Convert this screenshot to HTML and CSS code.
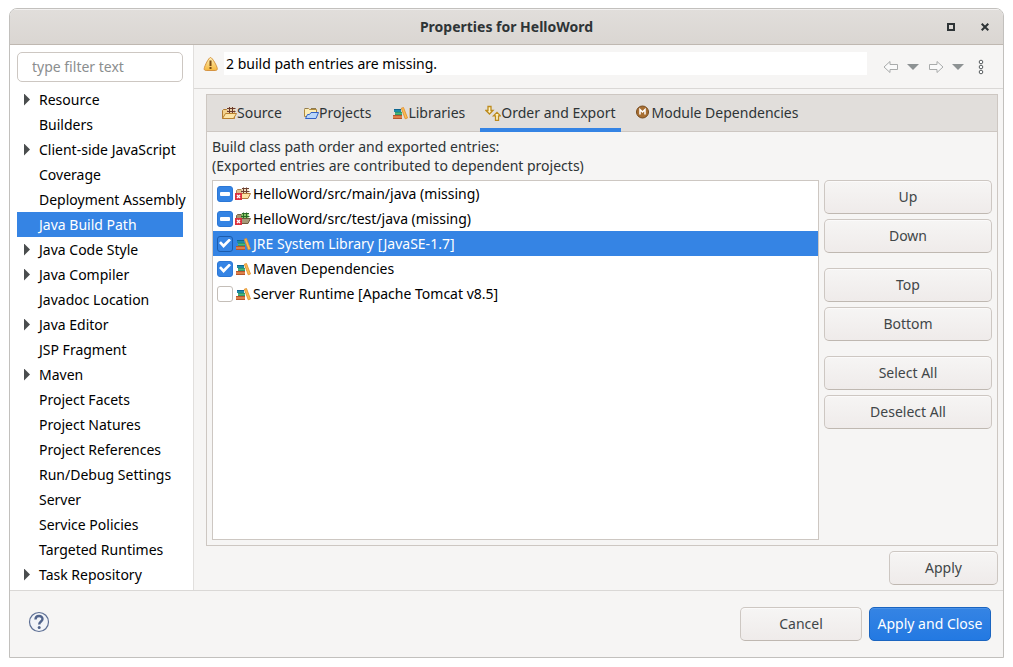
FILE: index.html
```html
<!DOCTYPE html>
<html lang="en">
<head>
<meta charset="utf-8">
<title>Properties for HelloWord</title>
<link rel="stylesheet" href="styles.css">
</head>
<body>
<svg class="defs" aria-hidden="true">
  <symbol id="books" viewBox="0 0 16 16">
    <path d="M2 4h7v3H2z" fill="#1d8ba8"/><path d="M2 4.500h7" stroke="#0d6690"/>
    <path d="M3 7h7v3H3z" fill="#4fb878"/><path d="M3 7.300h7M3 9.700h7" stroke="#1b8260" stroke-width=".7"/>
    <path d="M1 10h9v4H1z" fill="#dc8048"/><path d="M1 10.500h9M1 13.500h9" stroke="#b8552c"/>
    <path d="M9.300 3.200l2.200-.7 4 10.500-2.300.8z" fill="#f9bd58" stroke="#e08a26" stroke-width=".8"/>
  </symbol>
  <symbol id="source" viewBox="0 0 16 16">
    <path d="M1.500 13.500V5.500l1-1h3l1 1h7v8z" fill="#f3d28c" stroke="#b07a30"/>
    <path d="M6.500 2.500h7v6h-7z" fill="#e9d0a8"/><path d="M8.500 2v7M11.500 2v7M6 3.500h8.500M6 6.500h8.500" stroke="#6b3a2c"/>
    <path d="M1.500 13.500l3-5h11l-3 5z" fill="#fde5a6" stroke="#b9802e"/>
  </symbol>
  <symbol id="projects" viewBox="0 0 16 16">
    <path d="M1.500 11.500v-7l1-1h3l1 1h7v7z" fill="#fbedb9" stroke="#b08a3c"/>
    <path d="M1.500 3.500h3M8 3.500h5" stroke="#8d7b52"/>
    <path d="M2.500 13.500l2-4h2l1.500-2h7.500l-2.500 6z" fill="#b8d6fa" stroke="#3261c4"/>
  </symbol>
  <symbol id="order" viewBox="0 0 16 16">
    <path d="M3 1.500h3v4h2L4.500 9 1 5.500h2z" fill="#fff3c4" stroke="#bd8b1d" stroke-width="1.300"/>
    <path d="M10.500 15.300h3v-4.500h2L12 7.300 8.500 10.800h2z" fill="#fff3c4" stroke="#bd8b1d" stroke-width="1.300"/>
  </symbol>
  <symbol id="module" viewBox="0 0 16 16">
    <circle cx="6.500" cy="7" r="6" fill="#a86f32" stroke="#75491c"/>
    <path d="M4 9.500v-5l2.500 2.500L9 4.500v5" fill="none" stroke="#fff" stroke-width="1.500"/>
  </symbol>
  <symbol id="pkg" viewBox="0 0 16 16">
    <path d="M1.500 7.500v-3l1-1h4v4z" fill="#e3c08c" stroke="#b08050"/>
    <path d="M6.500 2.500h7v5h-7z" fill="#f0dec0"/><path d="M7 2.500h7M6 5.500h8.500M8.500 1.500v6M11.500 1.500v6" stroke="#6d4030"/>
    <path d="M1.500 7.500h14L13 12.500H4z" fill="#fde3a4" stroke="#b07a3c"/>
    <path d="M0 7h7v7H0z" fill="#dc3340"/><path d="M2 9l3 3M5 9l-3 3" stroke="#fff" stroke-width="1.300"/>
  </symbol>
  <symbol id="pkgtest" viewBox="0 0 16 16">
    <path d="M1.500 7.500v-3l1-1h4v4z" fill="#a99672" stroke="#7a6245"/>
    <path d="M6.500 2.500h7v5h-7z" fill="#8cc868"/><path d="M7 2.500h7M6 5.500h8.500M8.500 1.500v6M11.500 1.500v6" stroke="#2a6b28"/>
    <path d="M1.500 7.500h14L13 12.500H4z" fill="#a59a78" stroke="#705a3e"/>
    <path d="M0 7h7v7H0z" fill="#dc3340"/><path d="M2 9l3 3M5 9l-3 3" stroke="#fff" stroke-width="1.300"/>
  </symbol>
</svg>

<main class="dialog">
  <header class="titlebar">
    <h1 class="title">Properties for HelloWord</h1>
    <div class="window-buttons">
      <button class="plain" aria-label="Maximize"><svg width="8" height="8"><path d="M1 1h6v6H1z" fill="none" stroke="#2e3436" stroke-width="2"/></svg></button>
      <button class="plain" aria-label="Close"><svg width="8" height="8"><path d="M.7.7l6.600 6.600M7.300.7L.7 7.300" stroke="#2e3436" stroke-width="2"/></svg></button>
    </div>
  </header>

  <div class="body">
    <nav class="sidebar" aria-label="Property pages">
      <input class="filter" type="text" placeholder="type filter text" aria-label="Filter">
      <ul class="pages">
        <li class="page parent">Resource</li>
        <li class="page">Builders</li>
        <li class="page parent">Client-side JavaScript</li>
        <li class="page">Coverage</li>
        <li class="page">Deployment Assembly</li>
        <li class="page selected">Java Build Path</li>
        <li class="page parent">Java Code Style</li>
        <li class="page parent">Java Compiler</li>
        <li class="page">Javadoc Location</li>
        <li class="page parent">Java Editor</li>
        <li class="page">JSP Fragment</li>
        <li class="page parent">Maven</li>
        <li class="page">Project Facets</li>
        <li class="page">Project Natures</li>
        <li class="page">Project References</li>
        <li class="page">Run/Debug Settings</li>
        <li class="page">Server</li>
        <li class="page">Service Policies</li>
        <li class="page">Targeted Runtimes</li>
        <li class="page parent">Task Repository</li>
      </ul>
    </nav>

    <section class="content">
      <div class="message-bar">
        <svg class="warning" width="16" height="16" viewBox="0 0 16 16"><defs><linearGradient id="amber" x2="0" y2="1"><stop stop-color="#fff0b8"/><stop offset="1" stop-color="#f5b73c"/></linearGradient></defs><path d="M7.500 1.500C9.300 1.500 14 10 14.300 12.500c0 1.500-.8 2-2 2H3.200c-1.500 0-2.200-.7-2-2C1.600 10 5.700 1.500 7.500 1.500z" fill="url(#amber)" stroke="#d59443"/><path d="M7.500 4.500v5.500M7.500 11v2" stroke="#7a4b12" stroke-width="2"/></svg>
        <p class="message">2 build path entries are missing.</p>
        <div class="history">
          <button class="plain" aria-label="Back"><svg width="16" height="14"><path d="M1 7L7 1.500v3h7.500v5H7v3z" fill="#fafafa" stroke="#a9abab"/></svg></button>
          <button class="plain" aria-label="Back history"><svg width="12" height="14"><path d="M0 4h12L6 10z" fill="#8d9293"/></svg></button>
          <button class="plain" aria-label="Forward"><svg width="16" height="14"><path d="M15 7L9 1.500v3H1.500v5H9v3z" fill="#fafafa" stroke="#a9abab"/></svg></button>
          <button class="plain" aria-label="Forward history"><svg width="12" height="14"><path d="M0 4h12L6 10z" fill="#8d9293"/></svg></button>
          <button class="plain" aria-label="View menu"><svg width="6" height="16"><g fill="#fff" stroke="#555a5c"><circle cx="3" cy="3" r="1.800"/><circle cx="3" cy="8" r="1.800"/><circle cx="3" cy="13" r="1.800"/></g></svg></button>
        </div>
      </div>

      <div class="workspace">
        <div class="notebook">
          <div class="tabs" role="tablist">
            <button class="tab" role="tab"><svg class="icon"><use href="#source"/></svg>Source</button>
            <button class="tab" role="tab"><svg class="icon"><use href="#projects"/></svg>Projects</button>
            <button class="tab" role="tab"><svg class="icon"><use href="#books"/></svg>Libraries</button>
            <button class="tab active" role="tab" aria-selected="true"><svg class="icon"><use href="#order"/></svg>Order and Export</button>
            <button class="tab" role="tab"><svg class="icon"><use href="#module"/></svg>Module Dependencies</button>
          </div>
          <div class="panel">
            <p class="hint">Build class path order and exported entries:<br>(Exported entries are contributed to dependent projects)</p>
            <div class="columns">
              <div class="entries">
                <label class="entry"><input class="check mixed" type="checkbox" aria-checked="mixed"><svg class="icon"><use href="#pkg"/></svg>HelloWord/src/main/java (missing)</label>
                <label class="entry"><input class="check mixed" type="checkbox" aria-checked="mixed"><svg class="icon"><use href="#pkgtest"/></svg>HelloWord/src/test/java (missing)</label>
                <label class="entry selected"><input class="check" type="checkbox" checked><svg class="icon"><use href="#books"/></svg>JRE System Library [JavaSE-1.7]</label>
                <label class="entry"><input class="check" type="checkbox" checked><svg class="icon"><use href="#books"/></svg>Maven Dependencies</label>
                <label class="entry"><input class="check" type="checkbox"><svg class="icon"><use href="#books"/></svg>Server Runtime [Apache Tomcat v8.5]</label>
              </div>
              <div class="actions">
                <div class="group"><button class="button">Up</button><button class="button">Down</button></div>
                <div class="group"><button class="button">Top</button><button class="button">Bottom</button></div>
                <div class="group"><button class="button">Select All</button><button class="button">Deselect All</button></div>
              </div>
            </div>
          </div>
        </div>
        <button class="button apply">Apply</button>
      </div>
    </section>
  </div>

  <footer class="footer">
    <button class="plain help" aria-label="Help"><svg width="22" height="22"><circle cx="11" cy="11" r="9.500" fill="#f2f4f8" stroke="#5d6f94" stroke-width="1.200"/><path d="M7.500 8.500C7.500 4 14.500 4 14.500 8c0 2.500-3.300 2.500-3.300 5.500" fill="none" stroke="#51648c" stroke-width="2.400"/><circle cx="11.200" cy="16.500" r="1.500" fill="#51648c"/></svg></button>
    <button class="button cancel">Cancel</button>
    <button class="button primary">Apply and Close</button>
  </footer>
</main>
</body>
</html>
```
FILE: styles.css
```css
* { box-sizing: border-box; }

body {
  margin: 0;
  padding: 8px 9px 9px;
  height: 100vh;
  background: #fff;
  color: #2e3436;
  font: 14px/19px "Noto Sans", sans-serif;
}

button, input { font: inherit; color: inherit; }
p, h1, ul { margin: 0; padding: 0; }
.defs { display: none; }
.icon { flex: none; width: 16px; height: 16px; }

.plain {
  display: flex;
  padding: 0;
  border: 0;
  background: none;
}

.dialog {
  display: flex;
  flex-direction: column;
  height: 100%;
  border: 1px solid #c2c0bd;
  border-radius: 8px 8px 0 0;
  background: #f6f5f4;
  overflow: hidden;
}

.titlebar {
  display: grid;
  grid-template-columns: 1fr auto 1fr;
  align-items: center;
  flex: none;
  height: 36px;
  padding: 0 14px;
  border-bottom: 1px solid #bfb8b1;
  background: linear-gradient(#e1dedb, #dad6d2);
  box-shadow: inset 0 1px #f3f1f0;
}
.title { grid-column: 2; font-size: 14px; font-weight: 700; }
.window-buttons { display: flex; justify-content: flex-end; gap: 26px; }

.body { display: flex; flex: 1; min-height: 0; }

.sidebar {
  flex: none;
  width: 184px;
  padding: 7px 10px 0 7px;
  border-right: 1px solid #e1dfdd;
  background: #fff;
  color: #000;
}
.filter {
  display: block;
  width: 100%;
  height: 30px;
  padding: 0 14px 2px;
  border: 1px solid #cdc7c2;
  border-radius: 5px;
  background: #fff;
}
.filter::placeholder { color: #8b8e8f; opacity: 1; }
.pages { margin-top: 5px; list-style: none; }
.page {
  display: flex;
  align-items: center;
  height: 25px;
  padding-left: 22px;
  white-space: nowrap;
}
.parent { padding-left: 7px; }
.parent::before {
  content: "";
  width: 6px;
  height: 12px;
  margin-right: 9px;
  background: #4a4d4e;
  clip-path: polygon(0 0, 100% 50%, 0 100%);
}
.selected { background: #3584e4; color: #fff; }

.content { display: flex; flex: 1; flex-direction: column; min-width: 0; }
.message-bar {
  display: flex;
  flex: none;
  height: 44px;
  padding: 7px 19px 0 9px;
  border-bottom: 1px solid #dad8d6;
}
.warning { flex: none; margin: 4px 5px 0 0; }
.message { flex: 1; height: 23px; padding-left: 2px; line-height: 23px; background: #fff; color: #000; }
.history { display: flex; align-items: center; gap: 8px; height: 30px; margin-left: 16px; }
.history .plain:nth-child(3) { margin-left: 1px; }
.history .plain:last-child { margin-left: 6px; }

.workspace {
  display: flex;
  flex: 1;
  flex-direction: column;
  gap: 5px;
  min-height: 0;
  padding: 5px 5px 5px 12px;
}
.notebook { display: flex; flex: 1; flex-direction: column; min-height: 0; border: 1px solid #cdc7c2; }
.tabs {
  display: flex;
  flex: none;
  gap: 9px;
  height: 37px;
  padding-left: 8px;
  border-bottom: 1px solid #cdc7c2;
  background: #e1dedb;
}
.tab {
  display: flex;
  align-items: center;
  height: 37px;
  padding: 0 6px 2px;
  border: 0;
  background: none;
  white-space: nowrap;
}
.active { padding: 0 5px 2px; box-shadow: inset 0 -4px #3584e4; }

.panel { display: flex; flex: 1; flex-direction: column; gap: 5px; min-height: 0; padding: 5px; }
.columns { display: flex; flex: 1; gap: 5px; min-height: 0; }
.entries { flex: 1; border: 1px solid #cdc7c2; background: #fff; color: #000; }
.entry { display: flex; align-items: center; height: 25px; padding-left: 4px; }
.entry .icon { margin: 0 2px; }
.entry.selected { color: #fff; }

.check {
  display: flex;
  align-items: center;
  justify-content: center;
  flex: none;
  width: 16px;
  height: 16px;
  margin: 0;
  border: 1px solid #c4beb8;
  border-radius: 3px;
  background: #fff;
  appearance: none;
}
.check:checked, .check.mixed { border-color: #2b77d6; background: #3584e4; }
.selected .check:checked { border-color: #1b5cae; }
.check.mixed::before { content: ""; width: 10px; height: 4px; border-radius: 1px; background: #fff; }
.check:checked::before {
  content: "";
  width: 12px;
  height: 10px;
  background: #fff;
  clip-path: polygon(0 45%, 16% 28%, 38% 55%, 84% 0, 100% 18%, 38% 95%);
}

.actions { display: flex; flex: none; flex-direction: column; gap: 15px; width: 168px; }
.group { display: flex; flex-direction: column; gap: 5px; }
.button {
  height: 34px;
  padding: 0 9px 2px;
  border: 1px solid #cdc7c2;
  border-bottom-color: #bfb8b1;
  border-radius: 5px;
  background: linear-gradient(#f6f5f4, #efebea);
  box-shadow: inset 0 1px #fbfafa;
  color: #414648;
}
.apply { flex: none; align-self: flex-end; width: 109px; }

.footer {
  display: flex;
  flex: none;
  align-items: center;
  gap: 7px;
  height: 67px;
  padding: 0 12px 0 18px;
  border-top: 1px solid #dad8d6;
}
.help { margin-right: auto; padding-bottom: 4px; }
.cancel, .primary { width: 122px; }
.primary {
  padding: 0 0 2px;
  border-color: #1b65c0;
  background: linear-gradient(#3584e4, #2379e2);
  box-shadow: inset 0 1px #4a91e7;
  color: #fff;
  white-space: nowrap;
}
```
